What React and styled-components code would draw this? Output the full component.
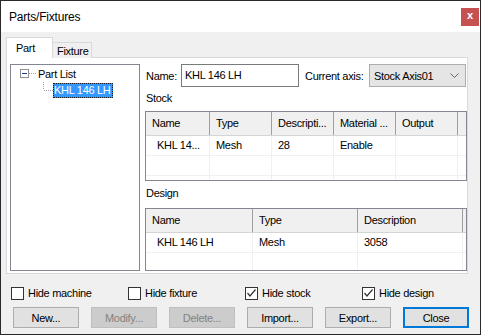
import React from "react";
import styled, { createGlobalStyle } from "styled-components";

const GlobalStyle = createGlobalStyle`
  html, body {
    margin: 0;
    padding: 0;
    background: #ffffff;
  }
  body {
    font-family: "Liberation Sans", Arial, sans-serif;
    font-size: 11px;
    letter-spacing: -0.3px;
    color: #000;
  }
`;

const stockCols = [
  { title: "Name", width: 64, value: "KHL 14...", first: true },
  { title: "Type", width: 62, value: "Mesh" },
  { title: "Descripti...", width: 62, value: "28" },
  { title: "Material ...", width: 62, value: "Enable" },
  { title: "Output", width: 62, value: "" },
];

const designCols = [
  { title: "Name", width: 107, value: "KHL 146 LH", first: true },
  { title: "Type", width: 105, value: "Mesh" },
  { title: "Description", width: 105, value: "3058" },
];

const checks = [
  { label: "Hide machine", checked: false },
  { label: "Hide fixture", checked: false },
  { label: "Hide stock", checked: true },
  { label: "Hide design", checked: true },
];

const buttons = [
  { label: "New..." },
  { label: "Modify...", disabled: true },
  { label: "Delete...", disabled: true },
  { label: "Import..." },
  { label: "Export..." },
  { label: "Close", primary: true },
];

const ListView = ({ cols, height, rows }) => (
  <ListBox height={height}>
    <HeaderRow>
      {cols.map((c) => (
        <HeaderCell key={c.title} width={c.width}>
          {c.title}
        </HeaderCell>
      ))}
      <HeaderFiller />
    </HeaderRow>
    {Array.from({ length: rows }).map((_, i) => (
      <BodyRow key={i}>
        {cols.map((c) => (
          <BodyCell key={c.title} width={c.width} first={c.first}>
            {i === 0 ? c.value : ""}
          </BodyCell>
        ))}
      </BodyRow>
    ))}
  </ListBox>
);

const App = () => {
  return (
    <>
      <GlobalStyle />
      <Window>
        <TitleBar>
          <Title>Parts/Fixtures</Title>
          <CloseButton>x</CloseButton>
        </TitleBar>

        <Body>
          <TabStrip>
            <Tab active>Part</Tab>
            <Tab>Fixture</Tab>
          </TabStrip>

          <Panel>
            <TreeBox>
              <TreeRow>
                <svg width="26" height="16" viewBox="0 0 26 16">
                  <rect x="9.5" y="3.5" width="8" height="8" fill="#fff" stroke="#919191" />
                  <line x1="11" y1="7.5" x2="16" y2="7.5" stroke="#1c3a8c" />
                  <line x1="18" y1="7.5" x2="25" y2="7.5" stroke="#a0a0a0" strokeDasharray="1 1" />
                </svg>
                <TreeText>Part List</TreeText>
              </TreeRow>
              <TreeRow>
                <svg width="42" height="16" viewBox="0 0 42 16">
                  <line x1="32.5" y1="0" x2="32.5" y2="8" stroke="#a0a0a0" strokeDasharray="1 1" />
                  <line x1="33" y1="8.5" x2="42" y2="8.5" stroke="#a0a0a0" strokeDasharray="1 1" />
                </svg>
                <TreeText selected>KHL 146 LH</TreeText>
              </TreeRow>
            </TreeBox>

            <RightCol>
              <NameRow>
                <Label width={35}>Name:</Label>
                <TextInput>KHL 146 LH</TextInput>
                <Label width={64}>Current axis:</Label>
                <Combo>
                  <span>Stock Axis01</span>
                  <svg width="9" height="5" viewBox="0 0 9 5">
                    <polyline points="0.5,0.5 4.5,4.5 8.5,0.5" fill="none" stroke="#606060" />
                  </svg>
                </Combo>
              </NameRow>

              <SectionLabel top={5} height={24}>Stock</SectionLabel>
              <ListView cols={stockCols} height={70} rows={3} />

              <SectionLabel top={6} height={27}>Design</SectionLabel>
              <ListView cols={designCols} height={63} rows={2} />
            </RightCol>
          </Panel>

          <CheckRow>
            {checks.map((c) => (
              <CheckItem key={c.label}>
                <CheckBox>
                  {c.checked && (
                    <svg width="11" height="11" viewBox="0 0 11 11">
                      <polyline points="1.5,5 4,8 9.5,1.5" fill="none" stroke="#333" strokeWidth="1.2" />
                    </svg>
                  )}
                </CheckBox>
                {c.label}
              </CheckItem>
            ))}
          </CheckRow>

          <ButtonRow>
            {buttons.map((b) => (
              <Button key={b.label} disabled={b.disabled} primary={b.primary}>
                {b.label}
              </Button>
            ))}
          </ButtonRow>
        </Body>
      </Window>
    </>
  );
};

export default App;

// --- Styled Components ---

const Window = styled.div`
  width: 481px;
  height: 335px;
  box-sizing: border-box;
  border: 1px solid #2a2a2a;
  display: flex;
  flex-direction: column;
  background: #f0f0f0;
`;

const TitleBar = styled.div`
  height: 31px;
  background: #ffffff;
  display: flex;
  align-items: center;
  justify-content: space-between;
  padding: 0 1px 0 8px;
`;

const Title = styled.div`
  font-size: 12px;
  letter-spacing: -0.2px;
  color: #000;
  margin-top: 1px;
`;

const CloseButton = styled.div`
  width: 18px;
  height: 18px;
  background: #c75050;
  color: #fff;
  font-weight: 700;
  font-size: 11px;
  display: flex;
  align-items: center;
  justify-content: center;
  line-height: 1;
  padding-bottom: 2px;
  box-sizing: border-box;
`;

const Body = styled.div`
  flex: 1;
  display: flex;
  flex-direction: column;
  padding: 5px 0 0 5px;
`;

const TabStrip = styled.div`
  height: 21px;
  display: flex;
  align-items: flex-end;
  position: relative;
  z-index: 1;
`;

const Tab = styled.div`
  box-sizing: border-box;
  border: 1px solid #d9d9d9;
  border-bottom: none;
  height: ${(p) => (p.active ? "21px" : "16px")};
  width: ${(p) => (p.active ? "47px" : "40px")};
  margin-left: ${(p) => (p.active ? "0" : "-1px")};
  background: ${(p) => (p.active ? "#ffffff" : "#f0f0f0")};
  padding: ${(p) => (p.active ? "4px 0 0 9px" : "2px 0 0 4px")};
  white-space: nowrap;
  line-height: 13px;
`;

const Panel = styled.div`
  box-sizing: border-box;
  width: 462px;
  height: 217px;
  margin-top: -1px;
  border: 1px solid #d9d9d9;
  background: #ffffff;
  display: flex;
  padding: 6px 0 0 3px;
`;

const TreeBox = styled.div`
  box-sizing: border-box;
  width: 130px;
  height: 207px;
  border: 1px solid #828790;
  background: #fff;
  padding-top: 1px;
  display: flex;
  flex-direction: column;
`;

const TreeRow = styled.div`
  height: 16px;
  display: flex;
  align-items: center;
`;

const TreeText = styled.span`
  height: 15px;
  line-height: 15px;
  padding: 0 2px 0 1px;
  box-sizing: border-box;
  white-space: nowrap;
  color: ${(p) => (p.selected ? "#fff" : "#000")};
  background: ${(p) => (p.selected ? "#3399ff" : "transparent")};
  outline: ${(p) => (p.selected ? "1px dotted #1a1a1a" : "none")};
  outline-offset: -1px;
`;

const RightCol = styled.div`
  width: 322px;
  margin-left: 5px;
  display: flex;
  flex-direction: column;
`;

const NameRow = styled.div`
  height: 23px;
  display: flex;
  align-items: center;
  padding-left: 1px;
`;

const Label = styled.span`
  width: ${(p) => p.width}px;
  flex-shrink: 0;
  white-space: nowrap;
`;

const TextInput = styled.div`
  box-sizing: border-box;
  width: 118px;
  flex-shrink: 0;
  height: 23px;
  border: 1px solid #7a7a7a;
  background: #fff;
  padding: 0 0 0 3px;
  line-height: 21px;
  margin-right: 6px;
`;

const Combo = styled.div`
  box-sizing: border-box;
  width: 97px;
  flex-shrink: 0;
  height: 23px;
  border: 1px solid #adadad;
  background: #e5e5e5;
  display: flex;
  align-items: center;
  justify-content: space-between;
  padding: 0 6px 0 4px;
  white-space: nowrap;
`;

const SectionLabel = styled.div`
  height: ${(p) => p.height}px;
  padding-top: ${(p) => p.top}px;
  padding-left: 1px;
  box-sizing: border-box;
  line-height: 13px;
`;

const ListBox = styled.div`
  box-sizing: border-box;
  height: ${(p) => p.height}px;
  border: 1px solid #828790;
  background: #fff;
  overflow: hidden;
`;

const HeaderRow = styled.div`
  display: flex;
  height: 23px;
  background: #f0f0f0;
  border-bottom: 1px solid #d5d5d5;
`;

const HeaderCell = styled.div`
  box-sizing: border-box;
  width: ${(p) => p.width}px;
  flex-shrink: 0;
  border-right: 1px solid #a0a0a0;
  padding: 0 0 0 6px;
  line-height: 23px;
  white-space: nowrap;
  overflow: hidden;
`;

const HeaderFiller = styled.div`
  flex: 1;
`;

const BodyRow = styled.div`
  display: flex;
  height: 19px;
  border-bottom: 1px solid #f0f0f0;
`;

const BodyCell = styled.div`
  box-sizing: border-box;
  width: ${(p) => p.width}px;
  flex-shrink: 0;
  border-right: 1px solid #f0f0f0;
  padding-left: ${(p) => (p.first ? "11px" : "6px")};
  line-height: 19px;
  white-space: nowrap;
  overflow: hidden;
`;

const CheckRow = styled.div`
  display: flex;
  margin-top: 13px;
  padding-left: 5px;
  height: 13px;
`;

const CheckItem = styled.div`
  width: 117px;
  display: flex;
  align-items: center;
  gap: 4px;
  line-height: 13px;
  white-space: nowrap;
`;

const CheckBox = styled.div`
  box-sizing: border-box;
  width: 13px;
  height: 13px;
  border: 1px solid #333;
  background: #fff;
  display: flex;
  align-items: center;
  justify-content: center;
`;

const ButtonRow = styled.div`
  display: flex;
  justify-content: space-between;
  margin-top: 7px;
  padding: 0 11px 0 7px;
`;

const Button = styled.div`
  box-sizing: border-box;
  width: 66px;
  height: 21px;
  display: flex;
  align-items: center;
  justify-content: center;
  background: ${(p) => (p.disabled ? "#cccccc" : "#e1e1e1")};
  border: ${(p) =>
    p.primary ? "2px solid #0078d7" : p.disabled ? "1px solid #bfbfbf" : "1px solid #adadad"};
  color: ${(p) => (p.disabled ? "#838383" : "#000")};
`;
